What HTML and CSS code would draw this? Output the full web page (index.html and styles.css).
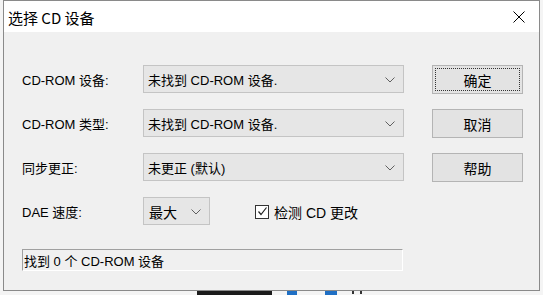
FILE: index.html
```html
<!DOCTYPE html>
<html lang="zh-CN">
<head>
<meta charset="utf-8">
<title>选择 CD 设备</title>
<link rel="stylesheet" href="styles.css">
</head>
<body>
<div class="desk">
  <div class="dialog">
    <div class="titlebar">
      <span class="title">选择 CD 设备</span>
      <svg class="close" width="12" height="12" viewBox="0 0 12 12"><path d="M0.5 0.5 L11.5 11.5 M11.5 0.5 L0.5 11.5" stroke="#000" stroke-width="1" fill="none"/></svg>
    </div>
    <div class="body">
      <div class="grid">
        <div class="label">CD-ROM 设备:</div>
        <div class="combo"><span>未找到 CD-ROM 设备.</span><svg class="chev" width="10" height="6" viewBox="0 0 10 6"><path d="M0.5 0.5 L5 5 L9.5 0.5" stroke="#606060" fill="none"/></svg></div>
        <div class="btn focus"><span class="focusrect">确定</span></div>

        <div class="label">CD-ROM 类型:</div>
        <div class="combo"><span>未找到 CD-ROM 设备.</span><svg class="chev" width="10" height="6" viewBox="0 0 10 6"><path d="M0.5 0.5 L5 5 L9.5 0.5" stroke="#606060" fill="none"/></svg></div>
        <div class="btn"><span>取消</span></div>

        <div class="label">同步更正:</div>
        <div class="combo"><span>未更正 (默认)</span><svg class="chev" width="10" height="6" viewBox="0 0 10 6"><path d="M0.5 0.5 L5 5 L9.5 0.5" stroke="#606060" fill="none"/></svg></div>
        <div class="btn"><span>帮助</span></div>

        <div class="label">DAE 速度:</div>
        <div class="row4">
          <div class="combo small"><span>最大</span><svg class="chev" width="10" height="6" viewBox="0 0 10 6"><path d="M0.5 0.5 L5 5 L9.5 0.5" stroke="#606060" fill="none"/></svg></div>
          <label class="check"><span class="box"><svg width="11" height="11" viewBox="0 0 11 11"><path d="M1.5 5.5 L4 8.5 L9.5 1.5" stroke="#222" stroke-width="1.2" fill="none"/></svg></span>检测 CD 更改</label>
        </div>
        <div></div>
      </div>
      <div class="status">找到 0 个 CD-ROM 设备</div>
    </div>
  </div>
  <div class="strip">
    <span class="blk dark"></span>
    <span class="blk blue1"></span>
    <span class="blk blue2"></span>
    <span class="blk mark1"></span>
    <span class="blk mark2"></span>
  </div>
</div>
</body>
</html>
```

FILE: styles.css
```css
html, body {
  margin: 0;
  padding: 0;
  background: #e9e9e9;
  overflow: hidden;
}
body {
  font-family: "Liberation Sans", "Noto Sans CJK SC", sans-serif;
  font-size: 13px;
  color: #000;
}
.desk {
  width: 543px;
  height: 295px;
  background: #f4f4f4;
  padding-left: 3px;
  box-sizing: border-box;
}
.dialog {
  width: 537px;
  height: 291px;
  box-sizing: border-box;
  border: 1px solid #8a8a8a;
  background: #f0f0f0;
  display: flex;
  flex-direction: column;
}
.titlebar {
  height: 31px;
  background: #fff;
  display: flex;
  align-items: center;
  justify-content: space-between;
  padding: 0 14px 0 4px;
  flex: none;
}
.title {
  font-family: "Noto Sans CJK SC", sans-serif;
  font-size: 15px;
  color: #000;
  padding-top: 1px;
}
.close {
  display: block;
  margin-top: 1px;
}
.body {
  padding: 33px 0 0 18px;
  display: flex;
  flex-direction: column;
}
.grid {
  display: grid;
  grid-template-columns: 121px 261px 119px;
  grid-auto-rows: 28px;
  column-gap: 0;
  row-gap: 16px;
}
.label {
  display: flex;
  align-items: center;
  padding-top: 1px;
}
.combo {
  box-sizing: border-box;
  height: 28px;
  border: 1px solid #c4c4c4;
  background: #e6e6e6;
  display: flex;
  align-items: center;
  justify-content: space-between;
  padding: 1px 8px 0 4px;
}
.combo.small {
  width: 67px;
  padding-left: 5px;
  font-size: 14px;
  font-family: "Noto Sans CJK SC", sans-serif;
}
.chev {
  display: block;
  margin-top: 1px;
}
.btn {
  box-sizing: border-box;
  height: 29px;
  margin-left: 28px;
  border: 1px solid #b4b4b4;
  background: #e3e3e3;
  display: flex;
  align-items: center;
  justify-content: center;
  font-family: "Noto Sans CJK SC", sans-serif;
  font-size: 14px;
}
.btn.focus {
  padding: 2px;
}
.focusrect {
  box-sizing: border-box;
  width: 100%;
  height: 100%;
  border: 1px dotted #333;
  display: flex;
  align-items: center;
  justify-content: center;
}
.row4 {
  display: flex;
  align-items: center;
  gap: 45px;
}
.check {
  display: flex;
  align-items: center;
  gap: 5px;
  font-size: 14px;
  padding-top: 1px;
}
.box {
  box-sizing: border-box;
  width: 14px;
  height: 14px;
  border: 1px solid #333;
  background: #fff;
  display: flex;
  align-items: center;
  justify-content: center;
}
.box svg { display: block; }
.status {
  margin-top: 24px;
  width: 381px;
  height: 22px;
  box-sizing: border-box;
  border-top: 1px solid #a0a0a0;
  border-left: 1px solid #a0a0a0;
  border-right: 1px solid #fff;
  border-bottom: 1px solid #fff;
  display: flex;
  align-items: center;
  padding-left: 1px;
}
.strip {
  height: 4px;
  display: flex;
  align-items: stretch;
  overflow: hidden;
}
.blk { display: block; height: 4px; }
.dark { width: 75px; margin-left: 194px; background: #1b1b1b; }
.blue1 { width: 10px; margin-left: 15px; background: #1f6fc4; }
.blue2 { width: 12px; margin-left: 28px; background: #1f6fc4; }
.mark1 { width: 2px; height: 3px; margin-left: 15px; background: #333; }
.mark2 { width: 2px; height: 3px; margin-left: 6px; background: #333; }
```
